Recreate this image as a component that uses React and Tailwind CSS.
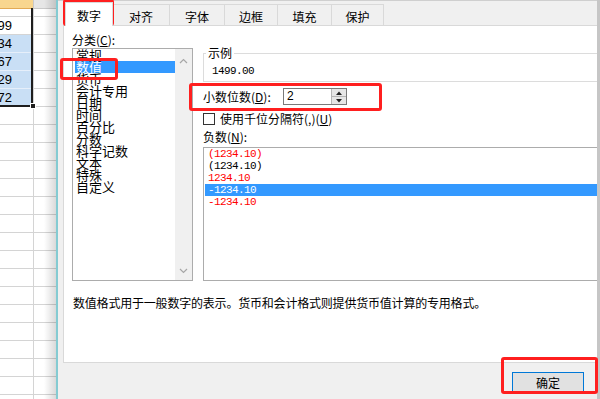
import React from "react";

const cells = [
  { v: "99", sel: false },
  { v: "34", sel: true },
  { v: "67", sel: true },
  { v: "29", sel: true },
  { v: "72", sel: true },
];

const categories = [
  "常规",
  "数值",
  "货币",
  "会计专用",
  "日期",
  "时间",
  "百分比",
  "分数",
  "科学记数",
  "文本",
  "特殊",
  "自定义",
];

const negatives = [
  { t: "(1234.10)", c: "text-[#ff0000]" },
  { t: "(1234.10)", c: "text-black" },
  { t: "1234.10", c: "text-[#ff0000]" },
  { t: "-1234.10", c: "text-white bg-[#3399ff]", sel: true },
  { t: "-1234.10", c: "text-[#ff0000]" },
];

const tabs = [
  { t: "对齐", w: "w-[57px]" },
  { t: "字体", w: "w-[55px]" },
  { t: "边框", w: "w-[53px]" },
  { t: "填充", w: "w-[54px]" },
  { t: "保护", w: "w-[52px]" },
];

function Chevron({ up }) {
  return (
    <svg width="9" height="6" viewBox="0 0 9 6">
      <path
        d={up ? "M1 5 L4.5 1.5 L8 5" : "M1 1 L4.5 4.5 L8 1"}
        fill="none"
        stroke="#a6a6a6"
        strokeWidth="1.2"
      />
    </svg>
  );
}

export default function App() {
  return (
    <div className="relative w-[600px] h-[399px] overflow-hidden flex bg-white font-['Noto_Sans_CJK_SC','Noto_Sans',sans-serif] text-[12px] text-black">
      {/* spreadsheet strip */}
      <div className="relative w-[56px] h-full shrink-0 flex flex-col font-['Liberation_Sans',sans-serif]">
        <div className="flex h-[9px] shrink-0">
          <div className="w-[33px] bg-[#f8d68f] border-b border-[#e2aa55]" />
          <div className="flex-1 bg-[#e6e6e6] border-l border-b border-[#c9c9c9]" />
        </div>
        <div className="flex h-[8px] shrink-0">
          <div className="w-[33px] bg-white border-b border-[#d4d4d4]" />
          <div className="flex-1 border-l border-b border-[#d4d4d4]" />
        </div>
        {cells.map((c, i) => (
          <div key={i} className="flex h-[18px] shrink-0">
            <div
              className={
                "w-[33px] border-b flex " +
                (c.sel ? "bg-[#c9dff5] border-[#e6effa]" : "bg-white border-[#d4d4d4]")
              }
            >
              <div className="w-[12px] text-[13px] leading-[17px] whitespace-nowrap flex justify-end">
                {c.v}
              </div>
            </div>
            <div className="flex-1 border-l border-b border-[#d4d4d4]" />
          </div>
        ))}
        {Array.from({ length: 17 }).map((_, i) => (
          <div key={"r" + i} className="flex h-[18px] shrink-0">
            <div className="w-[33px] border-b border-[#d4d4d4]" />
            <div className="flex-1 border-l border-b border-[#d4d4d4]" />
          </div>
        ))}
        {/* selection outline */}
        <div className="absolute left-[-3px] top-[8px] w-[36px] h-[99px] border-r-2 border-b-2 border-[#1e1e1e]" />
        <div className="absolute left-[30px] top-[103px] w-[6px] h-[6px] bg-[#1e1e1e] border border-white" />
        {/* dialog shadow */}
        <div className="absolute right-0 top-0 bottom-0 w-[12px] bg-linear-to-r from-transparent to-black/15" />
      </div>

      {/* dialog frame edge */}
      <div className="w-[2px] h-full shrink-0 bg-[#84cbd2]" />

      {/* dialog */}
      <div className="flex-1 h-full flex flex-col bg-[#f0f0f0] border-t border-[#cfcfcf]">
        {/* tab strip */}
        <div className="h-[24px] shrink-0 flex items-end pl-[7px]">
          <div className="relative z-10 w-[48px] h-[24px] mb-[-1px] bg-white border-l border-t border-r border-[#d9d9d9] flex justify-center pt-[6px] leading-[14px]">
            数字
          </div>
          {tabs.map((t) => (
            <div
              key={t.t}
              className={
                t.w +
                " h-[21px] border-t border-r border-[#d9d9d9] bg-[#f0f0f0] flex justify-center pt-[5px] leading-[14px]"
              }
            >
              {t.t}
            </div>
          ))}
        </div>

        {/* panel */}
        <div className="ml-[5px] h-[338px] shrink-0 bg-white border-l border-t border-b border-[#d9d9d9] flex flex-col">
          <div className="flex items-start">
            {/* category column */}
            <div className="pl-[8px] pt-[7px] flex flex-col">
              <div className="h-[14px] leading-[14px]">
                分类(<span className="underline">C</span>):
              </div>
              <div className="mt-[1px] w-[121px] h-[233px] border border-[#acacac] flex">
                <div className="flex-1 overflow-hidden pl-[2px]">
                  {categories.map((c) => (
                    <div
                      key={c}
                      className={
                        "h-[12px] leading-[12px] text-[13px] pl-[1px] whitespace-nowrap " +
                        (c === "数值" ? "bg-[#3399ff] text-white" : "")
                      }
                    >
                      {c}
                    </div>
                  ))}
                </div>
                <div className="w-[17px] bg-[#f0f0f0] flex flex-col items-center justify-between pt-[9px] pb-[6px]">
                  <Chevron up />
                  <Chevron />
                </div>
              </div>
            </div>

            {/* right column */}
            <div className="flex-1 ml-[10px] pt-[20px] flex flex-col min-w-0">
              <fieldset className="min-w-0 border border-r-0 border-[#dcdcdc]">
                <legend className="ml-[2px] px-[2px] leading-[14px]">示例</legend>
                <div className="pl-[8px] pt-[5px] pb-[3px] leading-[13px] font-['Liberation_Mono',monospace] text-[11px] tracking-[-0.6px]">
                  1499.00
                </div>
              </fieldset>

              <div className="mt-[6px] h-[17px] flex items-center">
                <div className="w-[80px] leading-[14px] whitespace-nowrap">
                  小数位数(<span className="underline">D</span>):
                </div>
                <div className="w-[64px] h-[17px] border border-[#7a7a7a] flex bg-white">
                  <div className="flex-1 pl-[3px] leading-[15px] font-['Liberation_Sans',sans-serif] text-[12px]">
                    2
                  </div>
                  <div className="w-[15px] h-full flex flex-col bg-[#e6e6e6] border-l border-[#b5b5b5]">
                    <div className="flex-1 flex items-center justify-center border-b border-[#b5b5b5]">
                      <svg width="6" height="4" viewBox="0 0 6 4">
                        <path d="M0 4 L3 0.5 L6 4 Z" fill="#222" />
                      </svg>
                    </div>
                    <div className="flex-1 flex items-center justify-center">
                      <svg width="6" height="4" viewBox="0 0 6 4">
                        <path d="M0 0 L3 3.5 L6 0 Z" fill="#222" />
                      </svg>
                    </div>
                  </div>
                </div>
              </div>

              <div className="mt-[8px] h-[12px] flex items-center">
                <div className="w-[12px] h-[12px] border border-[#333] bg-white" />
                <div className="ml-[5px] leading-[14px] whitespace-nowrap">
                  使用千位分隔符(,)(<span className="underline">U</span>)
                </div>
              </div>

              <div className="mt-[5px] h-[14px] leading-[14px]">
                负数(<span className="underline">N</span>):
              </div>

              <div className="mt-[3px] h-[134px] border border-r-0 border-[#acacac] pl-[1px] font-['Liberation_Mono',monospace] text-[11px] tracking-[-0.6px]">
                {negatives.map((n, i) => (
                  <div
                    key={i}
                    className={"h-[12px] leading-[12px] pl-[3px] whitespace-nowrap " + n.c}
                  >
                    {n.t}
                  </div>
                ))}
              </div>
            </div>
          </div>

          <div className="mt-[15px] pl-[9px] leading-[14px] tracking-[-0.2px] whitespace-nowrap">
            数值格式用于一般数字的表示。货币和会计格式则提供货币值计算的专用格式。
          </div>
        </div>

        {/* footer */}
        <div className="flex-1 flex justify-end items-start pt-[9px] pr-[13px]">
          <div className="w-[72px] h-[21px] border border-[#0078d7] bg-[#e1e1e1] flex items-center justify-center leading-[14px]">
            确定
          </div>
        </div>
      </div>

      {/* right edge */}
      <div className="w-[3px] h-full shrink-0 bg-[#c6c6c6]" />

      {/* red annotation boxes */}
      <div className="absolute left-[63px] top-[-1px] w-[51px] h-[27px] border-[3px] border-[#ff1f1f] rounded-[3px]" />
      <div className="absolute left-[60px] top-[58px] w-[58px] h-[22px] border-[3px] border-[#ff1f1f] rounded-[3px]" />
      <div className="absolute left-[189px] top-[83px] w-[193px] h-[28px] border-[3px] border-[#ff1f1f] rounded-[3px]" />
      <div className="absolute left-[501px] top-[357px] w-[97px] h-[37px] border-[3px] border-[#ff1f1f] rounded-[3px]" />
    </div>
  );
}
